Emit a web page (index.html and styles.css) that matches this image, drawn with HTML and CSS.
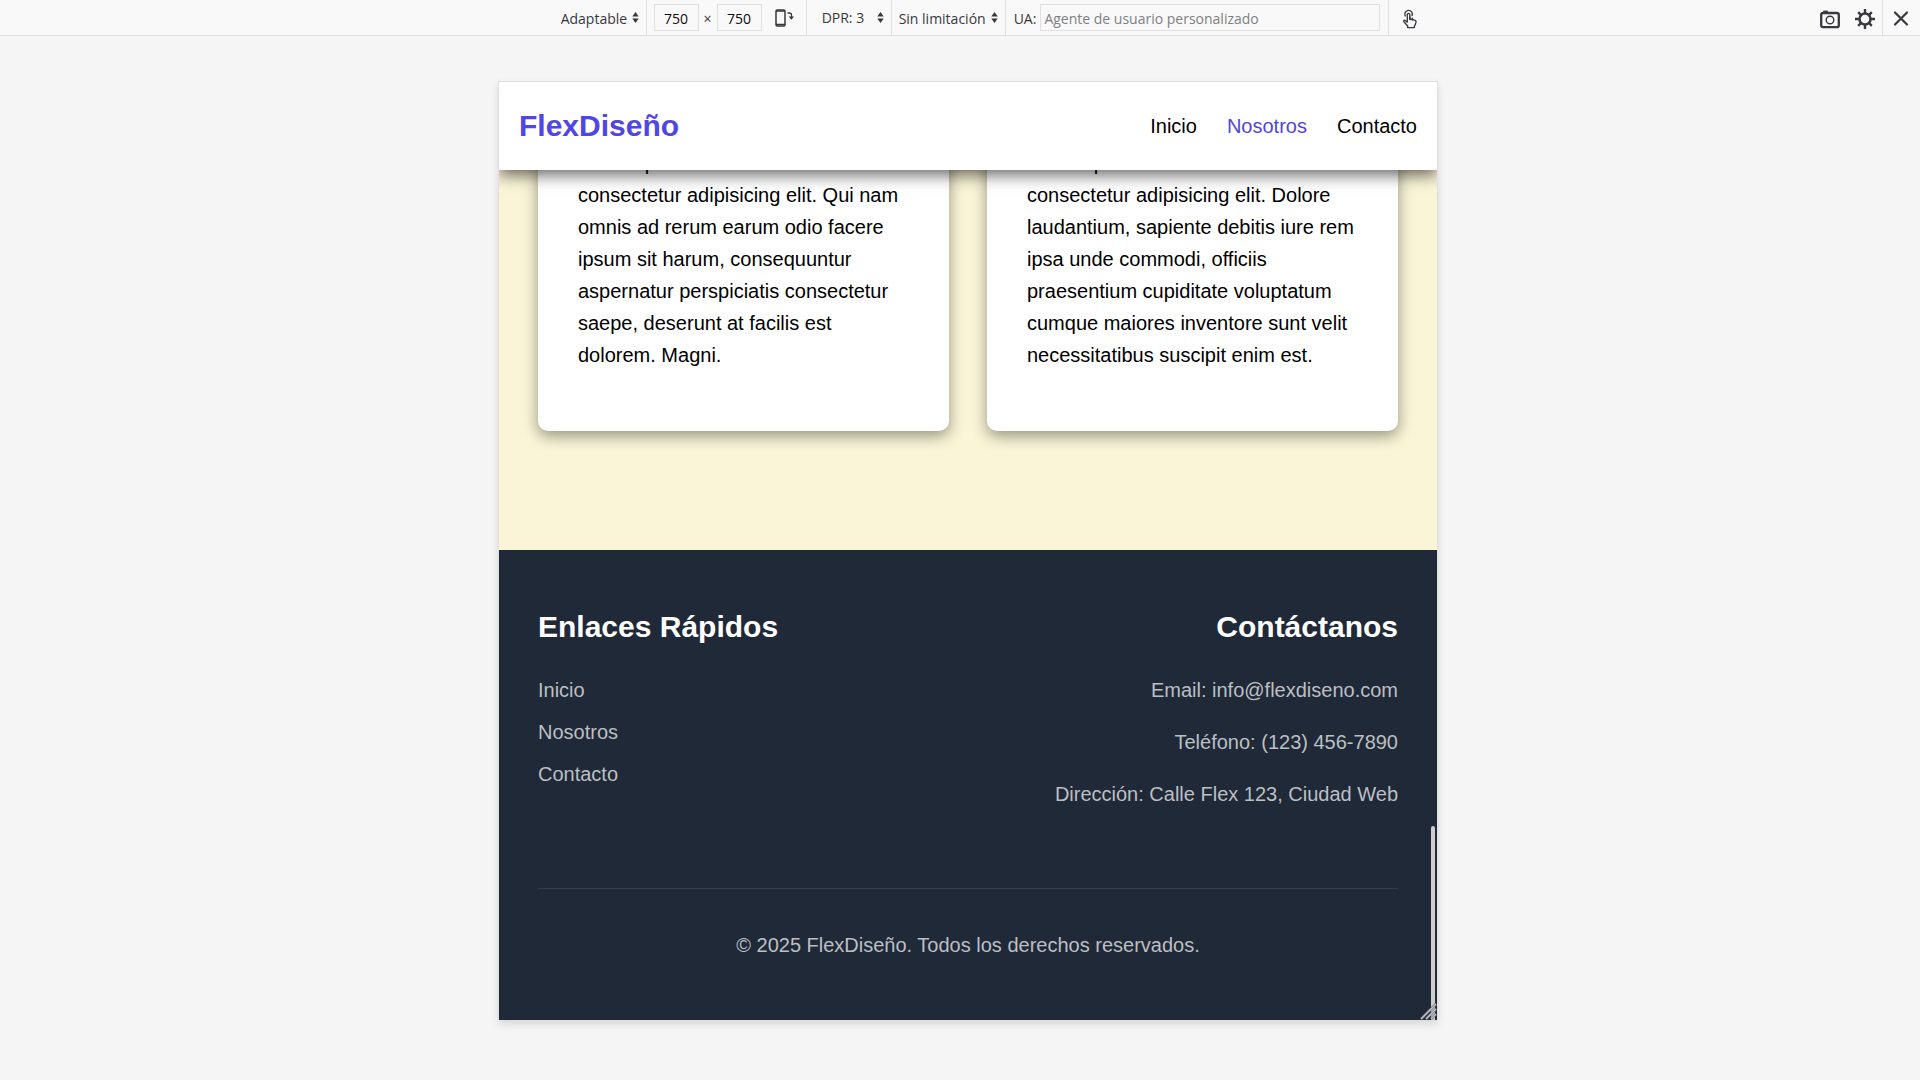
FILE: index.html
```html
<!DOCTYPE html>
<html lang="es">
<head>
<meta charset="utf-8">
<meta name="viewport" content="width=device-width, initial-scale=1">
<title>FlexDiseño</title>
<link rel="stylesheet" href="styles.css">
</head>
<body>
<div class="toolbar" role="toolbar" aria-label="Vista de diseño adaptable">
  <div class="tools">
    <div class="tool-group">
      <select class="picker" aria-label="Dispositivo"><option>Adaptable</option></select>
      <svg class="arrows" viewBox="0 0 7 12" aria-hidden="true"><path d="M3.500 0 7 5H0zM3.500 12 0 7h7z"/></svg>
    </div>
    <div class="tool-group size-group">
      <input class="field size" type="text" value="750" aria-label="Ancho">
      <span class="times">×</span>
      <input class="field size" type="text" value="750" aria-label="Alto">
      <button class="icon-button rotate" type="button" aria-label="Girar">
        <svg class="icon" width="20" height="20" viewBox="0 0 20 20"><rect x="2" y="2" width="9" height="16" rx="1.200" fill="none" stroke="currentColor" stroke-width="1.500"/><path d="M2 3h9M2 16.500h9" stroke="currentColor" stroke-width="1.500"/><path d="M13.500 5h2a2 2 0 0 1 2 2v3" fill="none" stroke="currentColor" stroke-width="1.300"/><path d="M14.700 8.500h5.300l-2.600 3.200z" fill="currentColor"/></svg>
      </button>
    </div>
    <div class="tool-group dpr-group">
      <select class="picker" aria-label="Densidad de píxeles"><option>DPR: 3</option></select>
      <svg class="arrows" viewBox="0 0 7 12" aria-hidden="true"><path d="M3.500 0 7 5H0zM3.500 12 0 7h7z"/></svg>
    </div>
    <div class="tool-group">
      <select class="picker" aria-label="Limitación de red"><option>Sin limitación</option></select>
      <svg class="arrows" viewBox="0 0 7 12" aria-hidden="true"><path d="M3.500 0 7 5H0zM3.500 12 0 7h7z"/></svg>
    </div>
    <div class="tool-group agent-group">
      <label class="agent-label" for="agent">UA:</label>
      <input class="field agent" id="agent" type="text" placeholder="Agente de usuario personalizado">
    </div>
    <button class="icon-button touch" type="button" aria-label="Simulación táctil">
      <svg class="icon" width="18" height="20" viewBox="0 0 20 22" fill="none" stroke="currentColor" stroke-width="1.500" stroke-linejoin="round" stroke-linecap="round"><path d="M7 14V6.200a1.400 1.400 0 0 1 2.800 0V11l5.400 1.200c1.200.3 1.700 1 1.500 2.100l-.9 3.200-.9 1.200v1.800H7.400v-1.800L3.200 14c-.7-1.200.5-2.100 1.500-1.400L7 14.500"/><path d="M4.700 7.600a4.200 4.200 0 1 1 7.600-.4M10 9v2.500M12.500 10v2"/></svg>
    </button>
  </div>
  <div class="actions">
    <button class="icon-button" type="button" aria-label="Captura de pantalla">
      <svg class="icon" width="20" height="20" viewBox="0 0 20 20" fill="none" stroke="currentColor"><rect x="1.200" y="4" width="17.600" height="14.200" rx="2" stroke-width="2.300"/><path d="M3.200 2.600h4.600" stroke-width="2"/><circle cx="10" cy="11" r="3.800" stroke-width="1.400"/></svg>
    </button>
    <button class="icon-button" type="button" aria-label="Ajustes">
      <svg class="icon" width="20" height="20" viewBox="0 0 20 20" fill="none" stroke="currentColor"><circle cx="10" cy="10" r="5.500" stroke-width="2.500"/><path d="M10 0v4M10 16v4M0 10h4M16 10h4M3.200 3.200l2.600 2.600M14.200 14.200l2.600 2.600M3.200 16.800l2.600-2.600M14.200 5.800l2.600-2.600" stroke-width="2.400"/></svg>
    </button>
    <button class="icon-button close" type="button" aria-label="Cerrar">
      <svg class="icon" width="20" height="20" viewBox="0 0 20 20"><path d="m4 4.500 12 12M16 4.500l-12 12" fill="none" stroke="currentColor" stroke-width="2.200" stroke-linecap="round"/></svg>
    </button>
  </div>
</div>

<div class="stage">
  <div class="device">
    <header class="header">
      <a class="logo" href="#">FlexDiseño</a>
      <nav class="nav">
        <a href="#">Inicio</a>
        <a class="current" href="#">Nosotros</a>
        <a href="#">Contacto</a>
      </nav>
    </header>
    <main class="cards">
      <article class="card"><p>Lorem ipsum dolor sit amet consectetur adipisicing elit. Qui nam omnis ad rerum earum odio facere ipsum sit harum, consequuntur aspernatur perspiciatis consectetur saepe, deserunt at facilis est dolorem. Magni.</p></article>
      <article class="card"><p>Lorem ipsum dolor sit amet consectetur adipisicing elit. Dolore laudantium, sapiente debitis iure rem ipsa unde commodi, officiis praesentium cupiditate voluptatum cumque maiores inventore sunt velit necessitatibus suscipit enim est.</p></article>
    </main>
    <footer class="footer">
      <div class="footer-columns">
        <section>
          <h2>Enlaces Rápidos</h2>
          <ul class="links">
            <li><a href="#">Inicio</a></li>
            <li><a href="#">Nosotros</a></li>
            <li><a href="#">Contacto</a></li>
          </ul>
        </section>
        <section class="contact">
          <h2>Contáctanos</h2>
          <p>Email: info@flexdiseno.com</p>
          <p>Teléfono: (123) 456-7890</p>
          <p>Dirección: Calle Flex 123, Ciudad Web</p>
        </section>
      </div>
      <p class="copyright">© 2025 FlexDiseño. Todos los derechos reservados.</p>
    </footer>
    <div class="scroll-thumb"></div>
    <svg class="resizer" width="17" height="17" viewBox="0 0 17 17" aria-hidden="true"><path d="M1 16 16 1M6 16 16 6M11 16l5-5" stroke="#6b7079" stroke-width="2.600"/><path d="M1 16 16 1M6 16 16 6M11 16l5-5" stroke="#c4c4c4" stroke-width="1.300"/></svg>
  </div>
</div>
</body>
</html>
```
FILE: styles.css
```css
* {
  box-sizing: border-box;
}

body {
  margin: 0;
  min-height: 100vh;
  background: #f5f5f5;
  font-family: "Liberation Sans", Arial, sans-serif;
  font-size: 20px;
  line-height: 32px;
  color: #000;
}

h2,
p,
ul {
  margin: 0;
  padding: 0;
}

a {
  color: inherit;
  text-decoration: none;
}

/* Browser toolbar */

.toolbar {
  display: grid;
  grid-template-columns: 1fr auto 1fr;
  height: 36px;
  padding-left: 64px;
  background: #f9f9fa;
  border-bottom: 1px solid #e0e0e2;
  color: #38383d;
  font-family: "Open Sans", "Noto Sans", sans-serif;
  font-size: 14px;
  line-height: 20px;
}

.tools {
  grid-column: 2;
  display: flex;
}

.tool-group {
  display: flex;
  align-items: center;
  gap: 4px;
  padding: 0 7px;
  border-right: 1px solid #e0e0e2;
}

.tool-group:first-child {
  padding-left: 8px;
}

.picker,
.field,
.icon-button {
  margin: 0;
  padding: 0;
  border: 0;
  background: transparent;
  color: inherit;
  font: inherit;
}

.picker {
  appearance: none;
  padding-top: 2px;
}

.dpr-group .picker {
  padding-top: 0;
}

.arrows {
  width: 7px;
  height: 11px;
  fill: #38383d;
}

.field {
  height: 27px;
  padding-top: 2px;
  border: 1px solid #e0e0e2;
}

.size {
  width: 45px;
  color: #0c0c0d;
  text-align: center;
}

.times {
  width: 10px;
  padding-top: 2px;
  text-align: center;
}

.dpr-group {
  gap: 12px;
  padding-left: 15px;
}

.agent-group {
  padding: 0 8px;
}

.agent-label {
  padding-top: 2px;
}

.agent {
  width: 340px;
  padding: 2px 3px 0;
}

.agent::placeholder {
  color: #808080;
  opacity: 1;
}

.icon-button {
  display: flex;
  align-items: center;
  justify-content: center;
  width: 35px;
  padding-top: 2px;
}

.rotate {
  width: 33px;
  padding: 0 0 0 4px;
}

.touch {
  width: 42px;
}

.icon {
  display: block;
}

.actions {
  display: flex;
  justify-content: flex-end;
}

.close {
  width: 38px;
  padding: 0 2px 0 0;
  border-left: 1px solid #e0e0e2;
}

/* Device frame */

.stage {
  display: flex;
  justify-content: center;
  padding: 45px 0 40px 16px;
}

.device {
  position: relative;
  width: 100%;
  max-width: 940px;
  border: 1px solid #e0e0e2;
  border-bottom: 0;
  box-shadow: 0 4px 8px rgba(0, 0, 0, 0.12);
}

.header {
  position: relative;
  z-index: 1;
  display: flex;
  align-items: center;
  justify-content: space-between;
  height: 88px;
  padding: 0 20px;
  background: #fff;
  box-shadow: 0 5px 15px rgba(0, 0, 0, 0.6);
  clip-path: inset(0 0 -40px 0);
}

.logo {
  color: #4f46e5;
  font-size: 30px;
  font-weight: bold;
}

.nav {
  display: flex;
  gap: 30px;
}

.current {
  color: #4f46e5;
}

/* The page is scrolled, so the cards start underneath the header */
.cards {
  display: grid;
  grid-template-columns: 1fr 1fr;
  gap: 38px;
  margin-top: -63px;
  padding: 0 39px 119px;
  background: #faf5d7;
}

.card {
  padding: 40px 40px 60px;
  background: #fff;
  border-radius: 10px;
  box-shadow: 0 5px 15px rgba(0, 0, 0, 0.4);
}

.footer {
  padding: 60px 39px 59px;
  background: #1f2937;
  color: #bcbfc3;
}

.footer-columns {
  display: flex;
  justify-content: space-between;
  padding-bottom: 78px;
  border-bottom: 1px solid #323d4b;
}

.footer h2 {
  margin-bottom: 30px;
  color: #fff;
  font-size: 30px;
  line-height: 34px;
}

.links {
  display: grid;
  gap: 10px;
  list-style: none;
}

.contact {
  text-align: right;
}

.contact p + p {
  margin-top: 20px;
}

.copyright {
  padding-top: 40px;
  text-align: center;
}

.scroll-thumb {
  position: absolute;
  right: 2px;
  bottom: 0;
  width: 4px;
  height: 194px;
  background: #ccc;
  border-radius: 2px 2px 0 0;
}

.resizer {
  position: absolute;
  right: 0;
  bottom: 0;
}
```
